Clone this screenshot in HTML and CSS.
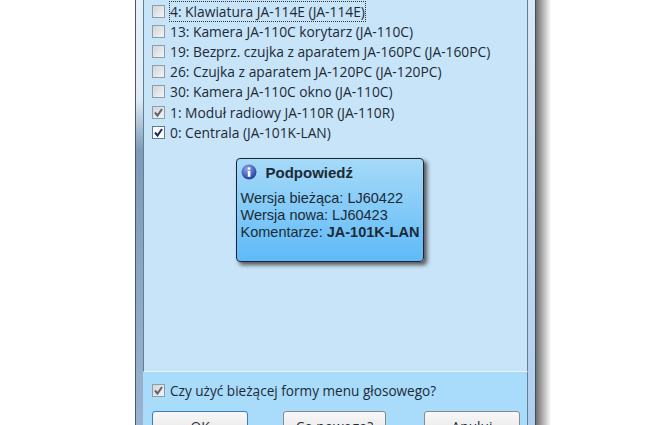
FILE: index.html
```html
<!DOCTYPE html>
<html>
  <head>
    <meta charset="utf-8">
    <title>Aktualizacja</title>
    <link rel="stylesheet" href="styles.css">
  </head>
  <body>
    <div class="window">
      <div class="dialog">
        <div class="list">
          <div class="row"><span class="box"></span><span class="label focused">4: Klawiatura JA-114E (JA-114E)</span></div>
          <div class="row"><span class="box"></span><span class="label">13: Kamera JA-110C korytarz (JA-110C)</span></div>
          <div class="row"><span class="box"></span><span class="label">19: Bezprz. czujka z aparatem JA-160PC (JA-160PC)</span></div>
          <div class="row"><span class="box"></span><span class="label">26: Czujka z aparatem JA-120PC (JA-120PC)</span></div>
          <div class="row"><span class="box"></span><span class="label">30: Kamera JA-110C okno (JA-110C)</span></div>
          <div class="row"><span class="box"><svg class="tick" width="11" height="11" viewBox="0 0 11 11"><path d="M2 5.5 L4.5 8.5 L9 2" fill="none" stroke="#5c6670" stroke-width="2"/></svg></span><span class="label">1: Moduł radiowy JA-110R (JA-110R)</span></div>
          <div class="row"><span class="box on"><svg class="tick" width="11" height="11" viewBox="0 0 11 11"><path d="M2 5.5 L4.5 8.5 L9 2" fill="none" stroke="#1a2a60" stroke-width="2"/></svg></span><span class="label">0: Centrala (JA-101K-LAN)</span></div>
          <div class="hint">
            <div class="hint-title">
              <svg class="info" width="16" height="16" viewBox="0 0 16 16">
                <defs>
                  <radialGradient id="ball" cx="40%" cy="30%" r="75%">
                    <stop offset="0" stop-color="#8fa6e8"/>
                    <stop offset="1" stop-color="#1c3a9c"/>
                  </radialGradient>
                </defs>
                <circle cx="8" cy="8" r="7.5" fill="url(#ball)"/>
                <rect x="6.8" y="6.8" width="2.6" height="6" fill="#fff"/>
                <rect x="6.8" y="3.4" width="2.6" height="2.2" fill="#fff"/>
              </svg>
              <b>Podpowiedź</b>
            </div>
            <div>Wersja bieżąca: LJ60422</div>
            <div>Wersja nowa: LJ60423</div>
            <div>Komentarze: <b>JA-101K-LAN</b></div>
          </div>
        </div>
        <div class="bottom">
          <div class="row voice"><span class="box"><svg class="tick" width="11" height="11" viewBox="0 0 11 11"><path d="M2 5.5 L4.5 8.5 L9 2" fill="none" stroke="#5c6670" stroke-width="2"/></svg></span><span class="label">Czy użyć bieżącej formy menu głosowego?</span></div>
          <div class="buttons">
            <button class="btn default">OK</button>
            <button class="btn wide">Co nowego?</button>
            <button class="btn">Anuluj</button>
          </div>
        </div>
      </div>
      <div class="shadow"></div>
    </div>
  </body>
</html>
```

FILE: styles.css
```css
html, body {
  margin: 0;
  height: 425px;
  overflow: hidden;
  background: #fff;
}

body {
  font-family: "Open Sans", "DejaVu Sans", sans-serif;
  font-size: 13.8px;
  color: #1c2a36;
}

.window {
  display: flex;
  height: 425px;
  margin-left: 135px;
}

.dialog {
  width: 401px;
  height: 425px;
  flex: none;
  box-sizing: border-box;
  background-image:
    linear-gradient(to bottom, #e8f0f8 0, #e0ebf5 100px, #7f9ab8 150px, #9ab4d0 100%),
    linear-gradient(to bottom, #d8e8f4, #b0cdee);
  background-size: 50% 100%;
  background-position: left top, right top;
  background-repeat: no-repeat;
  border-left: 1px solid #4a5c6c;
  border-right: 1px solid #3f4f5c;
  padding: 0 7px;
  display: flex;
  flex-direction: column;
}

.shadow {
  width: 15px;
  background: linear-gradient(to right, #6e6e6e, #fff);
}

.list {
  height: 372px;
  flex: none;
  box-sizing: border-box;
  background: #c8e4f8;
  border: 1px solid #5f7f95;
  border-top: 0;
  border-bottom: 1px solid #e6f4fc;
  padding-top: 1px;
  padding-left: 8px;
  display: flex;
  flex-direction: column;
}

.row {
  display: flex;
  align-items: center;
  height: 20.2px;
  gap: 5px;
  flex: none;
}

.box {
  width: 11px;
  height: 11px;
  flex: none;
  border: 1px solid #8e9ca6;
  background: linear-gradient(to bottom right, #d2d6da, #f2f3f4);
}

.tick {
  display: block;
}

.box.on {
  background: #fff;
  border-color: #5a7a96;
}

.focused {
  outline: 1px dotted #333;
}

.hint {
  align-self: center;
  flex: none;
  margin-top: 16px;
  margin-right: 20px;
  width: 188px;
  height: 104px;
  box-sizing: border-box;
  padding: 5px 0 5px 4px;
  background: linear-gradient(to bottom, #a6daf8, #5fbaf8);
  border: 1px solid #223;
  border-radius: 4px;
  box-shadow: 3px 3px 4px #555;
  font-family: "Liberation Sans", sans-serif;
  font-size: 14.5px;
  line-height: 17px;
}

.hint-title {
  display: flex;
  align-items: center;
  gap: 9px;
  height: 16px;
  margin-bottom: 10px;
  font-size: 15px;
}

.hint-title .info {
  flex: none;
}

.bottom {
  flex: 1;
  background: #a9dcfb;
  padding: 8px 7px 0 9px;
  border-right: 1px solid #5f7f95;
}

.voice {
  margin-bottom: 11px;
  font-size: 13.6px;
}

.buttons {
  display: flex;
  justify-content: space-between;
}

.btn {
  width: 96px;
  height: 30px;
  flex: none;
  padding: 0;
  background: linear-gradient(to bottom, #f8f8f8, #e2e2e2);
  border: 1px solid #8a8a8a;
  border-radius: 3px;
  font-family: "Open Sans", "DejaVu Sans", sans-serif;
  font-size: 13.8px;
  color: #1c2a36;
}

.btn.wide {
  width: 103px;
  margin-right: 3px;
}

.btn.default {
  border-color: #3c7fb1;
}
```
